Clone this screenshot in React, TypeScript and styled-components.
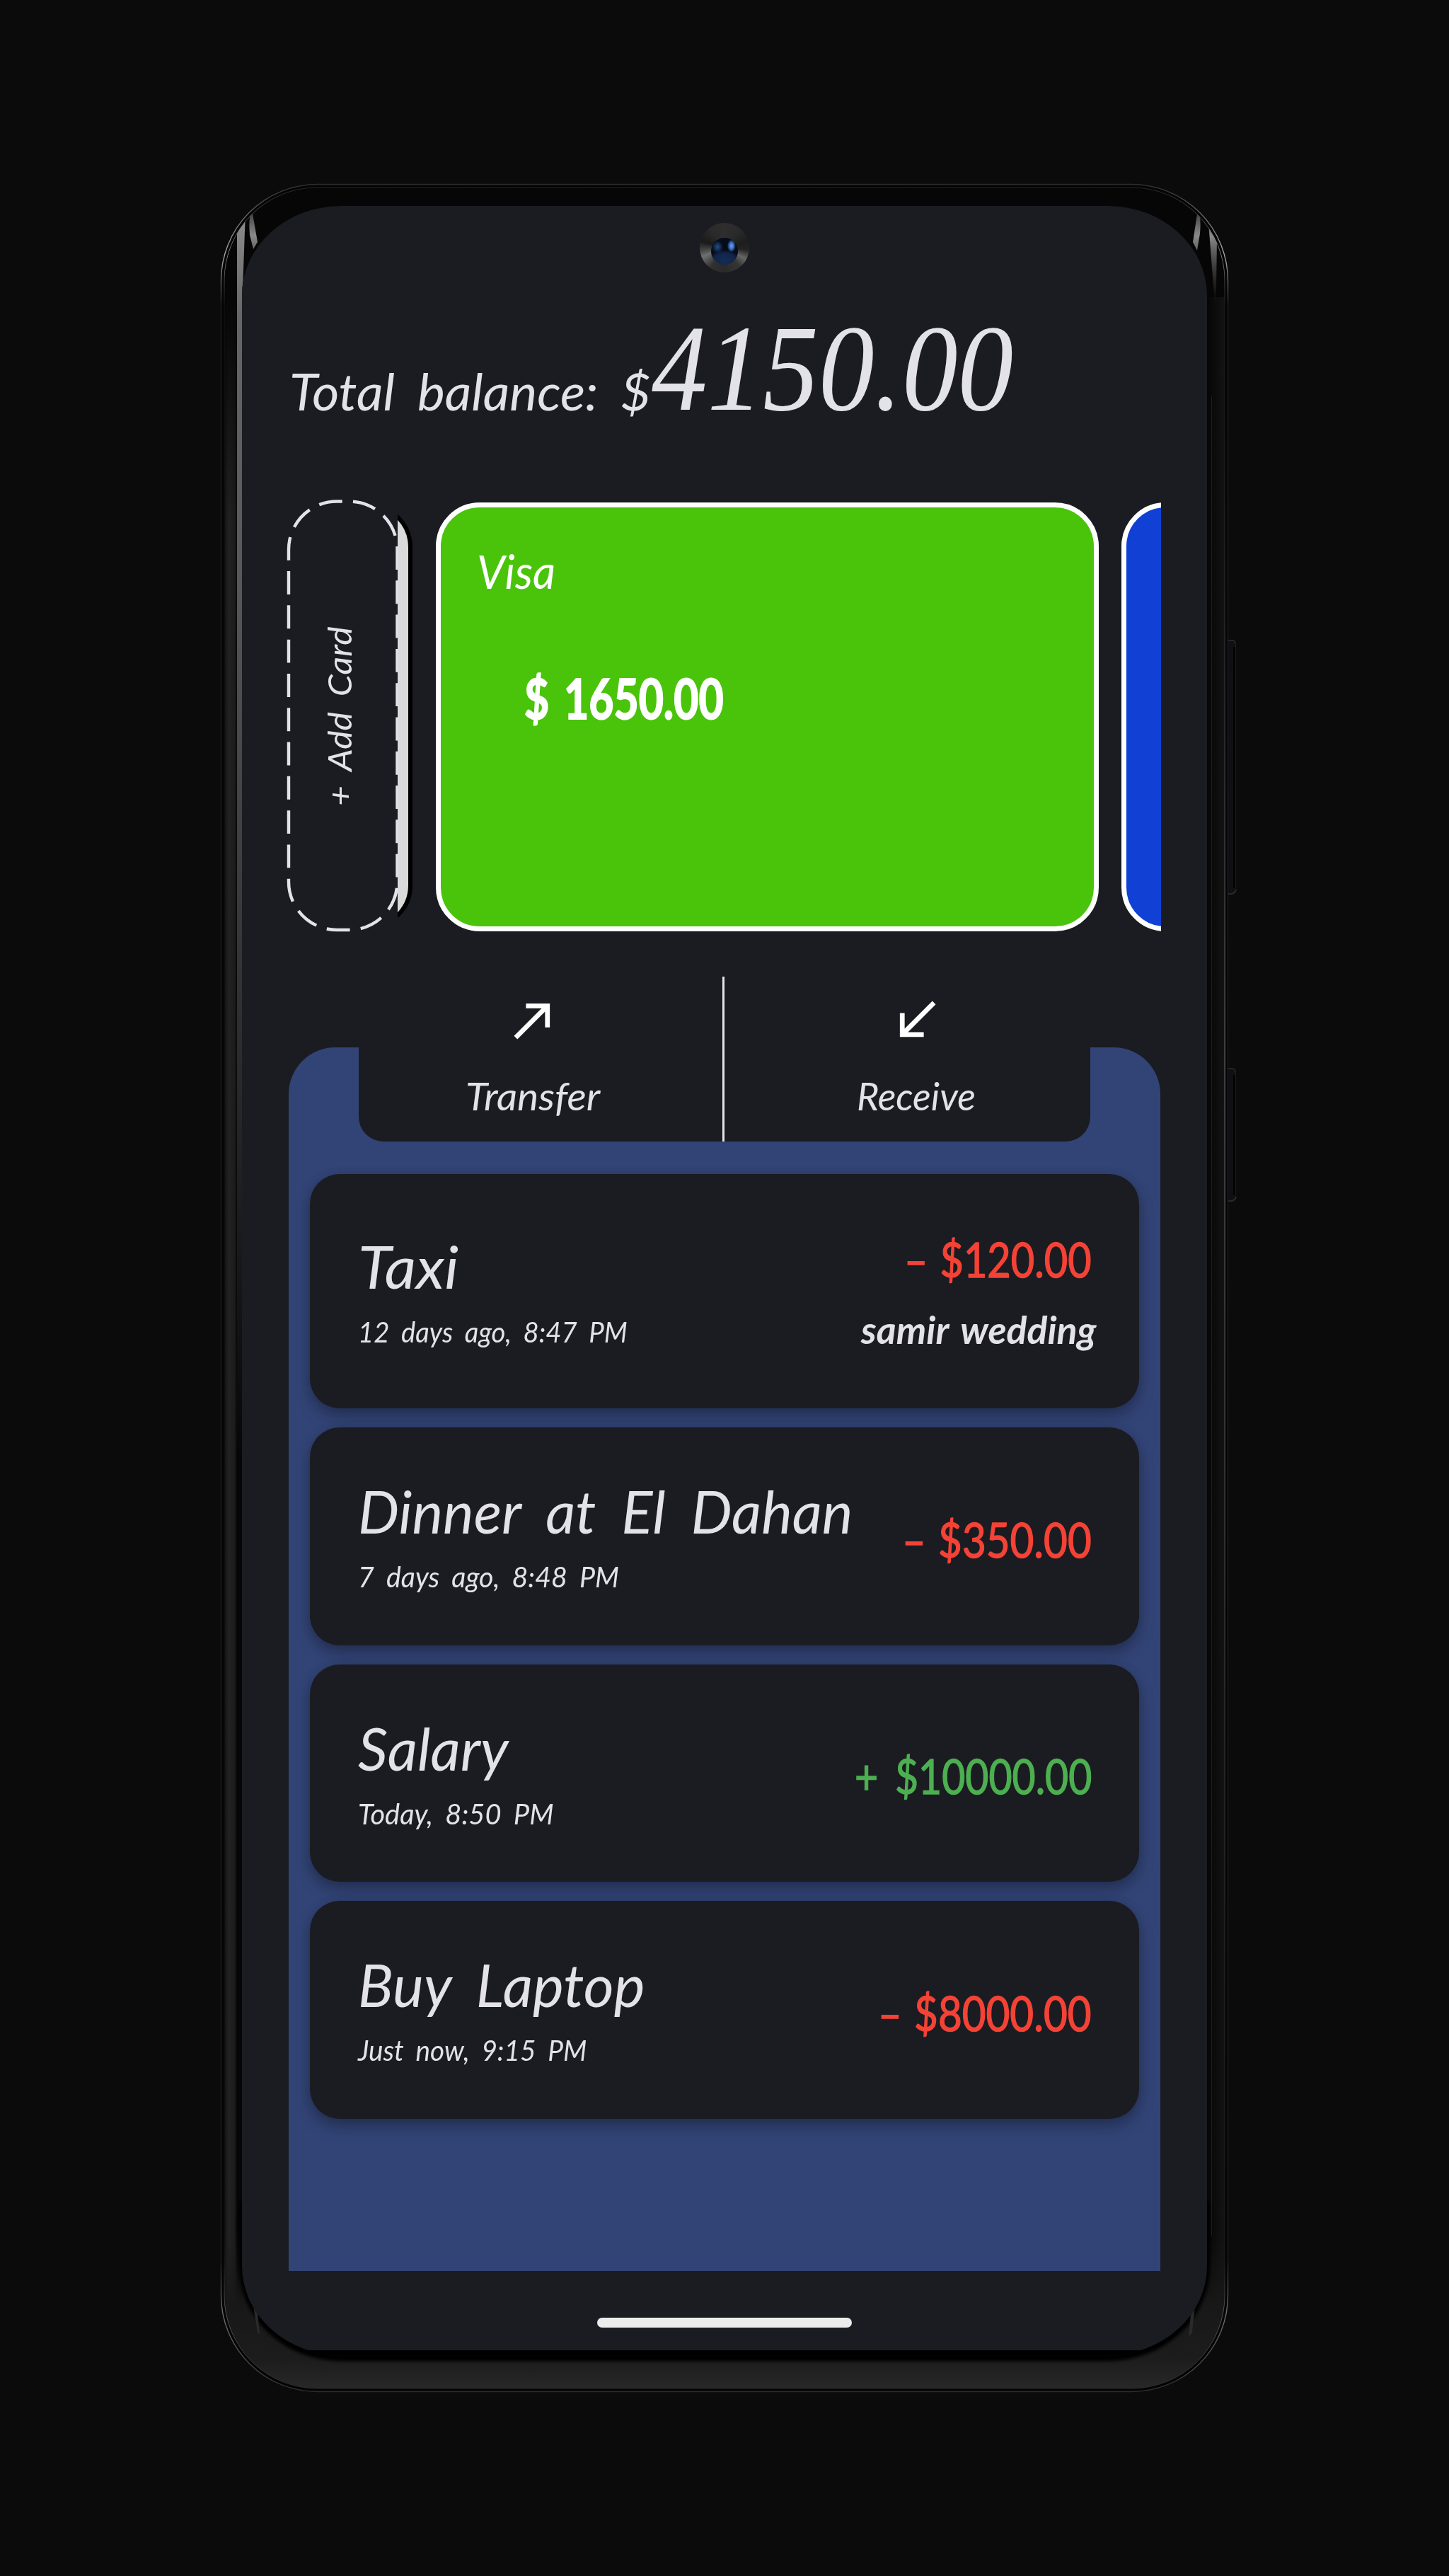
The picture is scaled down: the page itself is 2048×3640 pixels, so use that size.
import React, { useLayoutEffect, useRef, useState } from "react";
import styled, { createGlobalStyle, css } from "styled-components";

const surface = "#1b1c21";
const ink = "#e4e2e9";
const hand = `Lato, "Open Sans", "Liberation Sans", sans-serif`;

const GlobalStyle = createGlobalStyle`
  *, *::before, *::after { box-sizing: border-box; }
  body { margin: 0; background: #0b0b0b; }
`;

/* ---------- text that keeps a fixed measure ---------- */

type FitProps = {
  width: number;
  size: number;
  line: number;
  color?: string;
  weight?: number;
  upright?: boolean;
  serif?: boolean;
  space?: number;
  stroke?: number;
};

const FitBox = styled.div<{ $width: number; $line: number }>`
  flex: none;
  width: ${(p) => p.$width}px;
  height: ${(p) => p.$line}px;
`;

const FitInk = styled.span<{
  $size: number;
  $line: number;
  $color: string;
  $weight: number;
  $upright: boolean;
  $serif: boolean;
  $space: number;
  $stroke: number;
}>`
  display: inline-block;
  white-space: nowrap;
  transform-origin: 0 50%;
  font-family: ${(p) => (p.$serif ? `"Liberation Serif", serif` : hand)};
  font-size: ${(p) => p.$size}px;
  line-height: ${(p) => p.$line}px;
  font-weight: ${(p) => p.$weight};
  font-style: ${(p) => (p.$upright ? "normal" : "italic")};
  word-spacing: ${(p) => p.$space}em;
  color: ${(p) => p.$color};
  -webkit-text-stroke: ${(p) => p.$stroke}px currentColor;
  paint-order: stroke fill;
  stroke-linejoin: round;
`;

const FitText = ({
  width,
  size,
  line,
  color = ink,
  weight = 400,
  upright = false,
  serif = false,
  space = 0.2,
  stroke = 0,
  children,
}: React.PropsWithChildren<FitProps>) => {
  const ref = useRef<HTMLSpanElement>(null);
  const [scale, setScale] = useState(1);
  useLayoutEffect(() => {
    if (ref.current) setScale(width / ref.current.offsetWidth);
  }, [width]);
  return (
    <FitBox $width={width} $line={line}>
      <FitInk
        ref={ref}
        $size={size}
        $line={line}
        $color={color}
        $weight={weight}
        $upright={upright}
        $serif={serif}
        $space={space}
        $stroke={stroke}
        style={{ transform: `scaleX(${scale})` }}
      >
        {children}
      </FitInk>
    </FitBox>
  );
};

/* ---------- device ---------- */

const Page = styled.main`
  width: 2048px;
  height: 3640px;
  padding: 260px 0 0 312px;
  background: #0b0b0b;
  overflow: hidden;
`;

const Phone = styled.div`
  position: relative;
  width: 1424px;
  height: 3120px;
  padding: 31px 30px 0;
`;

const Bezel = styled.svg`
  position: absolute;
  left: 0;
  top: 0;
  overflow: visible;
`;

const Glass = styled.div`
  position: relative;
  width: 1364px;
  height: 3037px;
  border-radius: 140px / 126px;
  background: #000;
  overflow: hidden;
`;

const Screen = styled.div`
  height: 3030px;
  padding: 130px 66px 0;
  background: ${surface};
`;

const Camera = styled.div`
  position: absolute;
  left: 647px;
  top: 24px;
  display: grid;
  place-items: center;
  width: 70px;
  height: 70px;
  padding-top: 9px;
  border-radius: 50%;
  background: conic-gradient(
    #2e2e2e 0deg,
    #2a2a2a 40deg,
    #1d1d1d 75deg,
    #232323 95deg,
    #666 118deg,
    #353535 140deg,
    #2a2a2a 180deg,
    #303030 215deg,
    #707070 248deg,
    #4a4a4a 262deg,
    #1a1a1a 285deg,
    #2a2a2a 320deg,
    #2e2e2e 360deg
  );
`;

const Lens = styled.div`
  width: 38px;
  height: 38px;
  border-radius: 50%;
  background:
    radial-gradient(ellipse 6px 9px at 76% 30%, #6aa0ee 0, #3d6fc0 50%, transparent 100%),
    radial-gradient(ellipse 8px 9px at 24% 34%, #23508c 0, transparent 100%),
    radial-gradient(ellipse 22px 15px at 50% 84%, #152c57 0, #122548 70%, transparent 100%),
    #050c1a;
`;

const DeviceBezel = () => (
  <Bezel width="1436" height="3120" viewBox="0 0 1436 3120" fill="none">
    <defs>
      <linearGradient id="chin" x1="0" y1="2900" x2="0" y2="3116" gradientUnits="userSpaceOnUse">
        <stop offset="0" stopColor="#181818" stopOpacity="0" />
        <stop offset="0.45" stopColor="#181818" />
        <stop offset="0.8" stopColor="#1c1c1c" />
        <stop offset="1" stopColor="#282828" />
      </linearGradient>
      <linearGradient id="leftBar" x1="0" y1="50" x2="0" y2="1800" gradientUnits="userSpaceOnUse">
        <stop offset="0" stopColor="#8a8a8a" />
        <stop offset="0.08" stopColor="#666" />
        <stop offset="0.3" stopColor="#575757" />
        <stop offset="1" stopColor="#060606" />
      </linearGradient>
      <linearGradient id="leftStrip" x1="6" y1="0" x2="23" y2="0" gradientUnits="userSpaceOnUse">
        <stop offset="0" stopColor="#151515" />
        <stop offset="0.3" stopColor="#222" />
        <stop offset="0.8" stopColor="#1c1c1c" />
        <stop offset="1" stopColor="#070707" />
      </linearGradient>
      <linearGradient id="stripTop" x1="0" y1="160" x2="0" y2="480" gradientUnits="userSpaceOnUse">
        <stop offset="0" stopColor="#060606" />
        <stop offset="1" stopColor="#060606" stopOpacity="0" />
      </linearGradient>
      <linearGradient id="rightStrip" x1="1394" y1="0" x2="1420" y2="0" gradientUnits="userSpaceOnUse">
        <stop offset="0" stopColor="#060606" />
        <stop offset="1" stopColor="#141414" />
      </linearGradient>
      <linearGradient id="glint" x1="0" y1="30" x2="0" y2="175" gradientUnits="userSpaceOnUse">
        <stop offset="0" stopColor="#999" stopOpacity="0.2" />
        <stop offset="0.3" stopColor="#8a8a8a" />
        <stop offset="1" stopColor="#333" stopOpacity="0" />
      </linearGradient>
      <linearGradient id="edge" x1="0" y1="300" x2="0" y2="2950" gradientUnits="userSpaceOnUse">
        <stop offset="0" stopColor="#555" stopOpacity="0" />
        <stop offset="0.35" stopColor="#5c5c5c" />
        <stop offset="0.6" stopColor="#444" />
        <stop offset="1" stopColor="#333" stopOpacity="0" />
      </linearGradient>
      <linearGradient id="rim" x1="0" y1="0" x2="0" y2="3120" gradientUnits="userSpaceOnUse">
        <stop offset="0" stopColor="#2c2c30" />
        <stop offset="0.032" stopColor="#aaa" />
        <stop offset="0.055" stopColor="#1c1c20" />
        <stop offset="0.94" stopColor="#1c1c20" />
        <stop offset="0.965" stopColor="#707074" />
        <stop offset="1" stopColor="#2c2c2c" />
      </linearGradient>
      <filter id="soft" x="-5%" y="-5%" width="110%" height="110%">
        <feGaussianBlur stdDeviation="2" />
      </filter>
      <clipPath id="body">
        <rect x="5" y="5" width="1414" height="3110" rx="131" />
      </clipPath>
    </defs>
    {[
      [644, 1003],
      [1249, 1437],
    ].map(([top, bottom]) => (
      <g key={top}>
        <path d={`M1424 ${top}h7q4 1 4 6V${bottom - 7}q-1 7-6 7h-5z`} fill="#101012" />
        <path d={`M1432.5 ${top + 10}V${bottom - 8}`} stroke="#030303" strokeWidth="3" />
        <path d={`M1434.5 ${top + 6}V${bottom - 8}`} stroke="#1e1e1e" />
        <path d={`M1424 ${top + 1}h7q3 1 3 5`} stroke="#3a3a3e" />
        <path d={`M1424 ${bottom}h5q5-1 6-6`} stroke="#2a2a2a" strokeWidth="2" />
      </g>
    ))}
    <rect x="0.5" y="0.5" width="1423" height="3119" rx="136" fill="#040405" stroke="url(#rim)" strokeWidth="1.4" />
    <g clipPath="url(#body)">
      <rect x="5" y="5" width="1414" height="3110" fill="#060606" />
      <rect x="6" y="160" width="17" height="2960" fill="url(#leftStrip)" />
      <rect x="6" y="158" width="17" height="322" fill="url(#stripTop)" />
      <rect x="1394" y="160" width="26" height="2960" fill="url(#rightStrip)" />
      <path d="M23 54 L35 38 L31 150 V1800 H23z" fill="url(#leftBar)" />
      <path d="M1396 54 L1408 76 L1407 150 L1405 170z" fill="url(#glint)" />
      <rect x="5" y="2900" width="1414" height="220" fill="url(#chin)" />
      <path
        d="M31 2850 V2942 A139 129 0 0 0 170 3071 H1254 A139 129 0 0 0 1393 2942 V2850"
        stroke="#060606"
        strokeWidth="11"
        filter="url(#soft)"
      />
      <path d="M44 36 q-5 10-3 36 l5 20 6 -10z" fill="url(#glint)" />
      <path d="M1381 36 q5 10 3 34 l-4 24 -6-12z" fill="url(#glint)" />
      <path d="M46 2998 L52 3036 L55 3039 L52 3008z" fill="#2a2a2a" />
      <path d="M1377 2998 L1373 3036 L1368 3042 L1371 3010z" fill="#2a2a2a" />
    </g>
    <rect x="5" y="5" width="1414" height="3110" rx="131" stroke="url(#rim)" strokeOpacity="0.7" />
    <path d="M1400.5 300V2900" stroke="#1d1d1d" />
    <path d="M1419.2 300V2950" stroke="url(#edge)" strokeWidth="1.4" />
  </Bezel>
);

/* ---------- balance ---------- */

const Balance = styled.header`
  display: flex;
  height: 200px;
  padding-left: 1px;
`;

const BalanceLabel = styled.div`
  margin: 91px 1px 0 0;
`;

/* ---------- wallet ---------- */

const Wallet = styled.section`
  display: flex;
  width: 1237px;
  height: 612px;
  margin: 85px 0 0 -4px;
  overflow: hidden;
`;

const AddCard = styled.button`
  flex: none;
  display: grid;
  width: 158px;
  height: 612px;
  padding: 0;
  border: 0;
  background: none;
  & > * {
    grid-area: 1 / 1;
  }
`;

const AddLabel = styled.div`
  display: flex;
  align-items: center;
  justify-content: center;
  width: 158px;
  padding-right: 6px;
  & > div {
    transform: rotate(-90deg);
    text-align: left;
  }
`;

const Tucked = styled.div`
  flex: none;
  width: 21px;
  height: 602px;
  margin: 5px 33px 0 0;
  overflow: hidden;
  &::before {
    content: "";
    display: block;
    width: 160px;
    height: 100%;
    margin-left: -139px;
    border: 6px solid #000;
    border-radius: 62px;
    background: #dadada;
  }
`;

const BankCard = styled.article<{ $color: string }>`
  flex: none;
  width: 937px;
  height: 606px;
  margin: 4px 32px 0 0;
  padding: 50px 0 0 51px;
  border: 7px solid #fff;
  border-radius: 62px;
  background: ${(p) => p.$color};
`;

const CardAmount = styled.div`
  margin: 94px 0 0 67px;
`;

/* ---------- actions ---------- */

const Actions = styled.nav`
  position: relative;
  display: flex;
  width: 1034px;
  height: 233px;
  margin: 62px 0 -133px 99px;
  border-radius: 0 0 35px 35px;
  background: ${surface};
`;

const Action = styled.button<{ $side: "left" | "right" }>`
  flex: 1;
  display: flex;
  flex-direction: column;
  align-items: center;
  gap: 34px;
  border: 0;
  background: none;
  text-align: left;
  ${(p) =>
    p.$side === "left"
      ? css`
          padding: 21px 22px 0 0;
        `
      : css`
          padding: 21px 0 0 25px;
        `}
`;

const Divider = styled.span`
  width: 3px;
  background: ${ink};
`;

const ActionIcon = ({ d }: { d: string }) => (
  <svg width="81" height="81" viewBox="0 0 24 24" fill="#fff">
    <path d={d} />
  </svg>
);

/* ---------- transactions ---------- */

const Panel = styled.section`
  display: flex;
  flex-direction: column;
  gap: 27px;
  width: 1231.5px;
  height: 1729px;
  padding: 179px 29.5px 0 30px;
  border-radius: 66px 66px 0 0;
  background: #324476;
`;

const Row = styled.article<{ $tall: boolean }>`
  flex: none;
  display: flex;
  align-items: center;
  justify-content: space-between;
  height: ${(p) => (p.$tall ? 331 : 307.6)}px;
  padding: 0 67px 0 68px;
  border-radius: 42px;
  background: ${surface};
  box-shadow:
    0 12px 22px rgba(0, 0, 0, 0.24),
    0 2px 14px rgba(0, 0, 0, 0.14);
`;

const Details = styled.div`
  display: flex;
  flex-direction: column;
  gap: 20px;
  margin-top: -1px;
`;

const Figures = styled.div<{ $noted: boolean }>`
  display: flex;
  flex-direction: column;
  align-items: flex-end;
  gap: 28px;
  margin-top: ${(p) => (p.$noted ? 1 : 8)}px;
`;

const Note = styled.div`
  margin-right: -7px;
`;

const HomeBar = styled.div`
  width: 360px;
  height: 14px;
  margin: 66px auto 0;
  border-radius: 7px;
  background: #ececec;
`;

type Transaction = {
  title: string;
  titleWidth: number;
  date: string;
  dateWidth: number;
  amount: string;
  amountWidth: number;
  income?: boolean;
  note?: string;
};

const transactions: Transaction[] = [
  { title: "Taxi", titleWidth: 142, date: "12 days ago, 8:47 PM", dateWidth: 381, amount: "– $120.00", amountWidth: 265, note: "samir wedding" },
  { title: "Dinner at El Dahan", titleWidth: 699, date: "7 days ago, 8:48 PM", dateWidth: 369, amount: "– $350.00", amountWidth: 268 },
  { title: "Salary", titleWidth: 213, date: "Today, 8:50 PM", dateWidth: 277, amount: "+ $10000.00", amountWidth: 335, income: true },
  { title: "Buy Laptop", titleWidth: 406, date: "Just now, 9:15 PM", dateWidth: 323, amount: "– $8000.00", amountWidth: 302 },
];

export default function App() {
  return (
    <>
      <GlobalStyle />
      <Page>
        <Phone>
          <DeviceBezel />
          <Glass>
            <Screen>
              <Balance>
                <BalanceLabel>
                  <FitText width={511} size={72.6} line={80} space={0.2}>
                    Total balance: $
                  </FitText>
                </BalanceLabel>
                <FitText width={511} size={173} line={200} serif>
                  4150.00
                </FitText>
              </Balance>

              <Wallet>
                <AddCard>
                  <svg width="158" height="612" viewBox="404 706 158 612" fill="none">
                    <path
                      d="M408 840 V776.5 A68 68 0 0 1 476 708.5 H493.5 A68 68 0 0 1 561.5 776.5 V1246 A68 68 0 0 1 493.5 1314 H476 A68 68 0 0 1 408 1246 Z"
                      stroke={ink}
                      strokeWidth="4.4"
                      pathLength={29 * 48.4}
                      strokeDasharray="33 15.4"
                    />
                  </svg>
                  <AddLabel>
                    <FitText width={254} size={46} line={56}>
                      + Add Card
                    </FitText>
                  </AddLabel>
                </AddCard>
                <Tucked />
                <BankCard $color="#49c40b">
                  <FitText width={111} size={65} line={80} color="#fff">
                    Visa
                  </FitText>
                  <CardAmount>
                    <FitText width={282} size={79} line={90} color="#fff" weight={700} upright space={0.1} stroke={2}>
                      $ 1650.00
                    </FitText>
                  </CardAmount>
                </BankCard>
                <BankCard $color="#1040d4" />
              </Wallet>

              <Actions>
                <Action $side="left">
                  <ActionIcon d="M9 5v2h6.59L4 18.59 5.41 20 17 8.41V15h2V5z" />
                  <FitText width={190} size={54} line={66}>
                    Transfer
                  </FitText>
                </Action>
                <Divider />
                <Action $side="right">
                  <ActionIcon d="M20 5.41 18.59 4 7 15.59V9H5v10h10v-2H8.41z" />
                  <FitText width={168} size={54} line={66}>
                    Receive
                  </FitText>
                </Action>
              </Actions>

              <Panel>
                {transactions.map((t) => (
                  <Row key={t.title} $tall={!!t.note}>
                    <Details>
                      <FitText width={t.titleWidth} size={83} line={96}>
                        {t.title}
                      </FitText>
                      <FitText width={t.dateWidth} size={41} line={50}>
                        {t.date}
                      </FitText>
                    </Details>
                    <Figures $noted={!!t.note}>
                      <FitText
                        width={t.amountWidth}
                        size={67}
                        line={80}
                        color={t.income ? "#4caf50" : "#f44336"}
                        upright
                        space={t.income ? 0.16 : 0.04}
                        stroke={1.4}
                      >
                        {t.amount}
                      </FitText>
                      {t.note && (
                        <Note>
                          <FitText width={333} size={53} line={64} weight={700} space={0.1}>
                            {t.note}
                          </FitText>
                        </Note>
                      )}
                    </Figures>
                  </Row>
                ))}
              </Panel>
              <HomeBar />
            </Screen>
            <Camera>
              <Lens />
            </Camera>
          </Glass>
        </Phone>
      </Page>
    </>
  );
}
